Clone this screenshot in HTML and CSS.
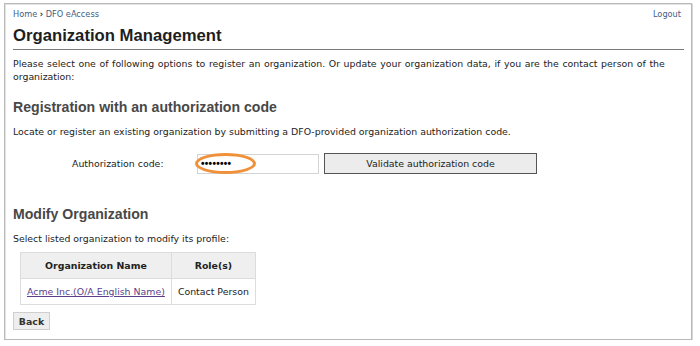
FILE: index.html
```html
<!DOCTYPE html>
<html lang="en">
  <head>
    <meta charset="UTF-8" />
    <title>Organization Management - DFO eAccess</title>
    <link rel="stylesheet" href="styles.css">
  </head>
  <body>
    <div class="frame">
      <div class="topbar">
        <div class="crumbs">
          <a href="#">Home</a> <span class="sep">&rsaquo;</span> <a href="#">DFO eAccess</a>
        </div>
        <a href="#" class="logout">Logout</a>
      </div>
      <h1>Organization Management</h1>
      <p class="intro">
        Please select one of following options to register an organization. Or update your organization data, if you are the contact person of the organization:
      </p>

      <h2>Registration with an authorization code</h2>
      <p>Locate or register an existing organization by submitting a DFO-provided organization authorization code.</p>
      <div class="code-row">
        <label for="authcode">Authorization code:</label>
        <div class="code-wrap">
          <input type="password" id="authcode" value="12345678" />
          <span class="highlight"></span>
        </div>
        <button class="validate">Validate authorization code</button>
      </div>

      <h2 class="modify">Modify Organization</h2>
      <p>Select listed organization to modify its profile:</p>
      <table>
        <thead>
          <tr>
            <th>Organization Name</th>
            <th>Role(s)</th>
          </tr>
        </thead>
        <tbody>
          <tr>
            <td><a href="#" class="org-link">Acme Inc.(O/A English Name)</a></td>
            <td>Contact Person</td>
          </tr>
        </tbody>
      </table>
      <button class="back">Back</button>
    </div>
  </body>
</html>
```

FILE: styles.css
```css
* {
  box-sizing: border-box;
  margin: 0;
  padding: 0;
}
body {
  background: #fff;
  font-family: "DejaVu Sans", Verdana, sans-serif;
  font-size: 9.4px;
  color: #222;
}
.frame {
  margin: 3px 0 0 4px;
  width: 688px;
  height: 337px;
  border: 1px solid #b9b9b9;
  box-shadow: 1px 1px 0 #d6d6d6, inset 1px 1px 0 #e4e4e4;
  padding: 5px 7px 0 8px;
}
.topbar {
  display: flex;
  justify-content: space-between;
  align-items: center;
  height: 10px;
  font-size: 8.2px;
  padding-right: 3px;
}
.topbar a {
  color: #3f5e86;
  text-decoration: none;
}
.sep {
  color: #333;
  font-weight: bold;
}
h1 {
  font-family: "Liberation Sans", Arial, sans-serif;
  font-size: 16.7px;
  font-weight: bold;
  color: #1e1e1e;
  margin-top: 6px;
  padding-bottom: 2px;
  border-bottom: 1px solid #7a7a7a;
  line-height: 22px;
}
p {
  line-height: 13px;
}
.intro {
  margin-top: 7px;
  word-spacing: 0.6px;
}
h2 {
  font-family: "Liberation Sans", Arial, sans-serif;
  font-size: 14.1px;
  font-weight: bold;
  color: #484848;
  margin-top: 15px;
  margin-bottom: 9px;
  line-height: 18px;
}
.code-row {
  display: flex;
  align-items: center;
  margin-top: 15px;
  padding-left: 59px;
}
.code-row label {
  width: 125px;
}
.code-wrap {
  position: relative;
}
.code-wrap input {
  display: block;
  width: 122px;
  height: 20px;
  border: 1px solid #d4d4d4;
  padding: 0 4px 0 3px;
  font-size: 10px;
  font-weight: bold;
  letter-spacing: 0.3px;
  color: #000;
  outline: none;
}
.highlight {
  position: absolute;
  left: -2px;
  top: -1px;
  width: 61px;
  height: 21px;
  border: 3px solid #f0913a;
  border-radius: 50%;
}
.validate {
  margin-left: 5px;
  width: 213px;
  height: 21px;
  background: #ececec;
  border: 1px solid #555;
  font-family: "DejaVu Sans", Verdana, sans-serif;
  font-size: 9.4px;
  color: #222;
}
.modify {
  margin-top: 31px;
}
table {
  margin: 7px 0 0 7px;
  border-collapse: collapse;
  border: 1px solid #dcdcdc;
}
th,
td {
  border: 1px solid #dcdcdc;
  padding: 0 6px;
  height: 26px;
  text-align: center;
}
th {
  background: #efefef;
  font-weight: bold;
  color: #222;
}
.org-link {
  color: #5b3f8c;
}
.back {
  display: block;
  margin-top: 7px;
  width: 37px;
  height: 18px;
  background: #eeeeee;
  border: 1px solid #cfcfcf;
  font-family: "DejaVu Sans", Verdana, sans-serif;
  font-size: 9.4px;
  font-weight: bold;
  color: #333;
}
```
